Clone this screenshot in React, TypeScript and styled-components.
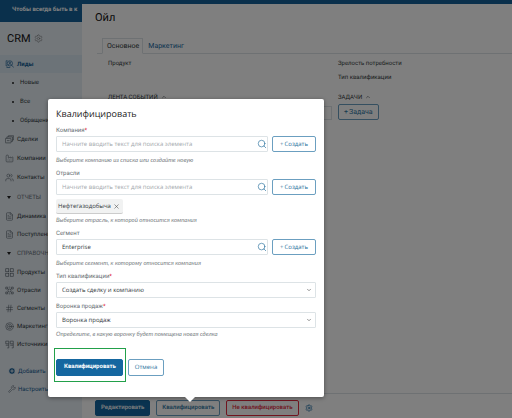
import React, { useId } from "react";
import styled, { createGlobalStyle, css } from "styled-components";
import {
  ChevronDown,
  ChevronUp,
  CirclePlus,
  Factory,
  FileText,
  Hash,
  Search,
  Settings,
  Target,
  Users,
  Wrench,
  X,
} from "lucide-react";

const color = {
  blue: "#1567a0",
  outline: "#2c739e",
  brand: "#146199",
  line: "#dde3e6",
  text: "#333a40",
  muted: "#777d82",
  red: "#e0283c",
};

const uiFont = `Roboto, "Liberation Sans", sans-serif`;

const GlobalStyle = createGlobalStyle`
  *, *::before, *::after { box-sizing: border-box; }
  body {
    margin: 0;
    font-family: ${uiFont};
    color: ${color.text};
    text-rendering: geometricPrecision;
  }
  button, input, select { font-family: inherit; margin: 0; text-rendering: inherit; }
  h1, h2, h3, p, ul { margin: 0; padding: 0; font-weight: 400; }
`;

const Page = styled.div`
  position: relative;
  display: grid;
  grid-template-columns: 82px minmax(0, 1fr);
  min-height: 100vh;
  overflow: hidden;
  background: ${color.brand};
`;

const Sidebar = styled.aside`
  display: flex;
  flex-direction: column;
  overflow: hidden;
  background: #e6eef5;
`;

const Notice = styled.p`
  flex: none;
  height: 22px;
  padding-left: 12px;
  background: ${color.brand};
  color: #fff;
  font-size: 6px;
  font-weight: 700;
  line-height: 20px;
  white-space: nowrap;
`;

const Brand = styled.h1`
  display: flex;
  align-items: center;
  gap: 3px;
  height: 33px;
  padding-left: 7px;
  color: #111;
  font-size: 11px;
  svg { color: #777; }
`;

const Nav = styled.nav`
  display: flex;
  flex-direction: column;
  white-space: nowrap;
`;

const NavItem = styled.a<{ $active?: boolean; $blue?: boolean; $tall?: boolean }>`
  display: flex;
  align-items: center;
  gap: 3px;
  height: ${(p) => (p.$tall ? 19 : 18)}px;
  padding-left: 5px;
  color: ${(p) => (p.$active || p.$blue ? "#135b92" : "#303940")};
  background: ${(p) => (p.$active ? "#d9e6f0" : "transparent")};
  font-size: 6px;
  font-weight: ${(p) => (p.$active ? 700 : 400)};
  text-decoration: none;
  svg { flex: none; color: ${(p) => (p.$active ? "#135b92" : "#56616a")}; }
`;

const SubItem = styled(NavItem)`
  gap: 6px;
  padding-left: 12px;
  &::before {
    content: "";
    width: 2px;
    height: 2px;
    border-radius: 50%;
    background: #222;
  }
`;

const NavSection = styled.h2`
  display: flex;
  align-items: center;
  gap: 6px;
  height: 20px;
  padding-left: 7px;
  color: #67717a;
  font-size: 6px;
  &::before {
    content: "";
    border: 2px solid transparent;
    border-top: 3px solid #222;
    border-bottom: 0;
  }
`;

const NavFooter = styled(Nav)`
  padding: 9px 0 0 3px;
  a { gap: 2px; }
`;

const Panel = styled.main`
  display: flex;
  flex-direction: column;
  margin-top: 4px;
  background: #fff;
`;

const PanelTitle = styled.h2`
  padding: 6px 13px 0;
  color: #111;
  font-size: 11px;
  line-height: 16px;
`;

const Tabs = styled.div`
  display: flex;
  margin: 12px 0 0 15px;
  padding-left: 5px;
  border-bottom: 1px solid ${color.line};
`;

const Tab = styled.button<{ $active?: boolean }>`
  height: 16px;
  margin-bottom: -1px;
  padding: 0 3px 0 4px;
  border: 1px solid ${(p) => (p.$active ? color.line : "transparent")};
  border-bottom-color: ${(p) => (p.$active ? "#fff" : "transparent")};
  background: none;
  color: ${(p) => (p.$active ? color.text : color.blue)};
  font-size: 7px;
  line-height: 14px;
`;

const Columns = styled.div`
  display: grid;
  grid-template-columns: 224px minmax(0, 1fr);
  column-gap: 6px;
  flex: 1;
  padding: 4px 12px 0 26px;
`;

const Column = styled.section`
  display: flex;
  flex-direction: column;
  align-items: flex-start;
`;

const Property = styled.p`
  height: 14px;
  font-size: 6px;
  line-height: 12px;
`;

const GroupTitle = styled.h3`
  display: flex;
  align-items: center;
  gap: 3px;
  height: 12px;
  font-size: 6px;
  white-space: nowrap;
`;

const Properties = styled.div`
  height: 33px;
`;

const EventBox = styled.input`
  width: 100%;
  height: 14px;
  margin-top: 3px;
  border: 1px solid ${color.line};
  background: #fff;
`;

const Button = styled.button<{ $kind?: "primary" | "danger" | "outline" }>`
  display: inline-flex;
  align-items: center;
  justify-content: center;
  gap: 1px;
  flex: none;
  height: 16px;
  padding: 0 6px;
  border: 1px solid #6b9fc0;
  border-radius: 2px;
  background: #fff;
  color: ${color.outline};
  font-size: 6px;
  line-height: 14px;
  white-space: nowrap;
  ${(p) =>
    p.$kind === "primary" &&
    css`
      border-color: ${color.blue};
      background: ${color.blue};
      color: #fff;
      font-family: ${uiFont};
      font-weight: 700;
    `}
  ${(p) =>
    p.$kind === "danger" &&
    css`
      border-color: ${color.red};
      color: ${color.red};
    `}
`;

const TaskButton = styled(Button)`
  margin-top: 1px;
  padding: 0 5px;
  font-size: 7px;
`;

const PanelFooter = styled.footer`
  display: flex;
  align-items: center;
  gap: 6px;
  height: 25px;
  padding: 4px 13px 0;
  border-top: 1px solid ${color.line};
  svg { color: ${color.blue}; }
`;

const FooterButton = styled(Button)`
  padding: 0 5px;
  font-weight: 500;
`;

const Backdrop = styled.div`
  position: absolute;
  inset: 0;
  background: rgba(0, 0, 0, 0.5);
`;

const Popover = styled.form`
  position: absolute;
  top: 99px;
  left: 48px;
  width: 276px;
  padding: 8px 8px 15px;
  border-radius: 2px;
  background: #fff;
  font-family: "Open Sans", "Noto Sans", sans-serif;
  box-shadow: 0 1px 4px rgba(0, 0, 0, 0.4);
  &::after {
    content: "";
    position: absolute;
    top: 100%;
    left: 137px;
    border: 5px solid transparent;
    border-top-color: #fff;
    border-bottom: 0;
  }
`;

const Heading = styled.h2`
  margin-bottom: 4px;
  color: #222;
  font-size: 9px;
  font-weight: 500;
  line-height: 14px;
`;

const Field = styled.div`
  margin-bottom: 3px;
`;

const Label = styled.label`
  display: block;
  color: #666d72;
  font-family: ${uiFont};
  font-size: 6px;
  line-height: 11px;
`;

const Star = styled.span`
  color: ${color.red};
`;

const Line = styled.div`
  display: flex;
  gap: 4px;
`;

const controlBox = css`
  display: block;
  width: 100%;
  height: 16px;
  padding: 0 16px 0 5px;
  border: 1px solid ${color.line};
  border-radius: 1px;
  background: #fff;
  color: ${color.text};
  font-size: 6px;
  outline: none;
`;

const ControlWrap = styled.div<{ $blue?: boolean }>`
  position: relative;
  flex: 1;
  svg {
    position: absolute;
    top: 50%;
    right: ${(p) => (p.$blue ? 1 : 4)}px;
    transform: translateY(-50%);
    color: ${(p) => (p.$blue ? color.outline : "#555")};
    pointer-events: none;
  }
`;

const TextInput = styled.input`
  ${controlBox}
  &::placeholder { color: #a3a8ac; opacity: 1; }
`;

const Select = styled.select`
  ${controlBox}
  appearance: none;
`;

const CreateButton = styled(Button)`
  width: 44px;
  padding: 0;
`;

const ChipRow = styled.div`
  display: flex;
`;

const Chip = styled.span`
  display: inline-flex;
  align-items: center;
  height: 15px;
  margin-top: 4px;
  padding: 0 2px;
  border-bottom: 1px solid #ccc;
  border-radius: 2px;
  background: #f1f2f2;
  color: ${color.text};
  font-size: 6px;
`;

const ChipClose = styled.button`
  display: inline-flex;
  padding: 0 1px 0 2px;
  border: 0;
  background: none;
  color: #555;
`;

const Hint = styled.p<{ $near?: boolean }>`
  padding-top: ${(p) => (p.$near ? 3 : 5)}px;
  color: ${color.muted};
  font-family: Lato, ${uiFont};
  font-size: 6px;
  font-style: italic;
  line-height: 8px;
`;

const Actions = styled.div`
  display: flex;
  align-items: center;
  gap: 2px;
  margin: 9px 0 0 -2px;
`;

const Highlight = styled.div`
  display: flex;
  align-items: center;
  height: 34px;
  padding: 4px 2px 0 1px;
  border: 1px solid #22a04a;
`;

const SubmitButton = styled(Button)`
  height: 17px;
  padding: 0 6px 0 7px;
`;

const CancelButton = styled(Button)`
  height: 17px;
  margin-top: 4px;
`;

const icon = { size: 9, strokeWidth: 1.5 };

function Drawing({ children }: { children: React.ReactNode }) {
  return (
    <svg width="9" height="9" viewBox="0 0 24 24" fill="none" stroke="currentColor" strokeWidth="1.7">
      {children}
    </svg>
  );
}

const LeadIcon = () => (
  <Drawing>
    <path d="M3 2v14M3 2h4M3 16h4" />
    <circle cx="13" cy="9" r="7" />
    <circle cx="13" cy="7" r="2" />
    <path d="M9 13c1-4 7-4 8 0M18 14l5 6M4 20h10" />
  </Drawing>
);
const DealIcon = () => (
  <Drawing>
    <rect x="1" y="9" width="15" height="12" rx="1" />
    <path d="M5 9V5h15v12h-4M9 5V2h14v11h-3M5 15h7" />
  </Drawing>
);
const ProductIcon = () => (
  <Drawing>
    <rect x="2" y="2" width="8" height="8" />
    <rect x="14" y="2" width="8" height="8" />
    <rect x="2" y="14" width="8" height="8" />
    <rect x="14" y="14" width="8" height="8" />
  </Drawing>
);
const IndustryIcon = () => (
  <Drawing>
    <circle cx="12" cy="12" r="4" />
    <path d="M2 3h5v5H2zM17 3h5v5h-5zM2 16h5v5H2zM17 16h5v5h-5zM10 3h4M10 21h4M7 7l2 2M17 7l-2 2M7 17l2-2M17 17l-2-2" />
  </Drawing>
);
const SourceIcon = () => (
  <Drawing>
    <path d="M2 3h8v7H2zM14 3h8v7h-8zM2 14h8v7H6M14 14h8v7h-4M10 10v4M22 10v4" />
  </Drawing>
);

function Required() {
  return <Star>*</Star>;
}

type LookupProps = {
  label: string;
  required?: boolean;
  value?: string;
  hint: string;
  tag?: string;
};

function LookupField({ label, required, value, hint, tag }: LookupProps) {
  const id = useId();
  return (
    <Field>
      <Label htmlFor={id}>
        {label}
        {required && <Required />}
      </Label>
      <Line>
        <ControlWrap $blue>
          <TextInput id={id} defaultValue={value} placeholder="Начните вводить текст для поиска элемента" />
          <Search size={10} strokeWidth={1.6} />
        </ControlWrap>
        <CreateButton type="button">
          <span>+</span>Создать
        </CreateButton>
      </Line>
      {tag && (
        <ChipRow>
          <Chip>
            {tag}
            <ChipClose type="button" aria-label="Удалить">
              <X size={7} strokeWidth={2} />
            </ChipClose>
          </Chip>
        </ChipRow>
      )}
      <Hint $near={!!tag}>{hint}</Hint>
    </Field>
  );
}

function SelectField({ label, value, hint }: { label: string; value: string; hint?: string }) {
  const id = useId();
  return (
    <Field>
      <Label htmlFor={id}>
        {label}
        <Required />
      </Label>
      <ControlWrap>
        <Select id={id} defaultValue={value}>
          <option>{value}</option>
        </Select>
        <ChevronDown size={6} strokeWidth={2.5} />
      </ControlWrap>
      {hint && <Hint $near>{hint}</Hint>}
    </Field>
  );
}

export default function App() {
  return (
    <Page>
      <GlobalStyle />
      <Sidebar>
        <Notice>Чтобы всегда быть в к</Notice>
        <Brand>
          CRM <Settings size={9} strokeWidth={1.5} />
        </Brand>
        <Nav>
          <NavItem href="#leads" $active><LeadIcon />Лиды</NavItem>
          <SubItem href="#new" $tall>Новые</SubItem>
          <SubItem href="#all" $tall>Все</SubItem>
          <SubItem href="#requests" $tall>Обращения</SubItem>
          <NavItem href="#deals" $tall><DealIcon />Сделки</NavItem>
          <NavItem href="#companies" $tall><Factory {...icon} />Компании</NavItem>
          <NavItem href="#contacts" $tall><Users {...icon} />Контакты</NavItem>
          <NavSection>ОТЧЕТЫ</NavSection>
          <NavItem href="#dynamics"><FileText {...icon} />Динамика</NavItem>
          <NavItem href="#income"><FileText {...icon} />Поступления</NavItem>
          <NavSection>СПРАВОЧНИКИ</NavSection>
          <NavItem href="#products"><ProductIcon />Продукты</NavItem>
          <NavItem href="#industries"><IndustryIcon />Отрасли</NavItem>
          <NavItem href="#segments"><Hash {...icon} />Сегменты</NavItem>
          <NavItem href="#marketing"><Target {...icon} />Маркетинг</NavItem>
          <NavItem href="#sources"><SourceIcon />Источники</NavItem>
        </Nav>
        <NavFooter>
          <NavItem href="#add" $blue><CirclePlus size={8} fill="#135b92" stroke="#fff" strokeWidth={2.5} />Добавить</NavItem>
          <NavItem href="#settings" $blue><Wrench size={8} strokeWidth={1.5} />Настроить</NavItem>
        </NavFooter>
      </Sidebar>

      <Panel>
        <PanelTitle>Ойл</PanelTitle>
        <Tabs>
          <Tab $active>Основное</Tab>
          <Tab>Маркетинг</Tab>
        </Tabs>
        <Columns>
          <Column>
            <Properties>
              <Property>Продукт</Property>
            </Properties>
            <GroupTitle>ЛЕНТА СОБЫТИЙ <ChevronUp size={6} /></GroupTitle>
            <EventBox aria-label="Лента событий" />
          </Column>
          <Column>
            <Properties>
              <Property>Зрелость потребности</Property>
              <Property>Тип квалификации</Property>
            </Properties>
            <GroupTitle>ЗАДАЧИ <ChevronUp size={6} /></GroupTitle>
            <TaskButton><span>+</span>Задача</TaskButton>
          </Column>
        </Columns>
        <PanelFooter>
          <FooterButton $kind="primary">Редактировать</FooterButton>
          <FooterButton>Квалифицировать</FooterButton>
          <FooterButton $kind="danger">Не квалифицировать</FooterButton>
          <Settings size={8} strokeWidth={2} />
        </PanelFooter>
      </Panel>

      <Backdrop />
      <Popover aria-label="Квалифицировать">
        <Heading>Квалифицировать</Heading>
        <LookupField label="Компания" required hint="Выберите компанию из списка или создайте новую" />
        <LookupField label="Отрасли" tag="Нефтегазодобыча" hint="Выберите отрасль, к которой относится компания" />
        <LookupField label="Сегмент" value="Enterprise" hint="Выберите сегмент, к которому относится компания" />
        <SelectField label="Тип квалификации" value="Создать сделку и компанию" />
        <SelectField label="Воронка продаж" value="Воронка продаж" hint="Определите, в какую воронку будет помещена новая сделка" />
        <Actions>
          <Highlight>
            <SubmitButton type="button" $kind="primary">Квалифицировать</SubmitButton>
          </Highlight>
          <CancelButton type="button">Отмена</CancelButton>
        </Actions>
      </Popover>
    </Page>
  );
}
